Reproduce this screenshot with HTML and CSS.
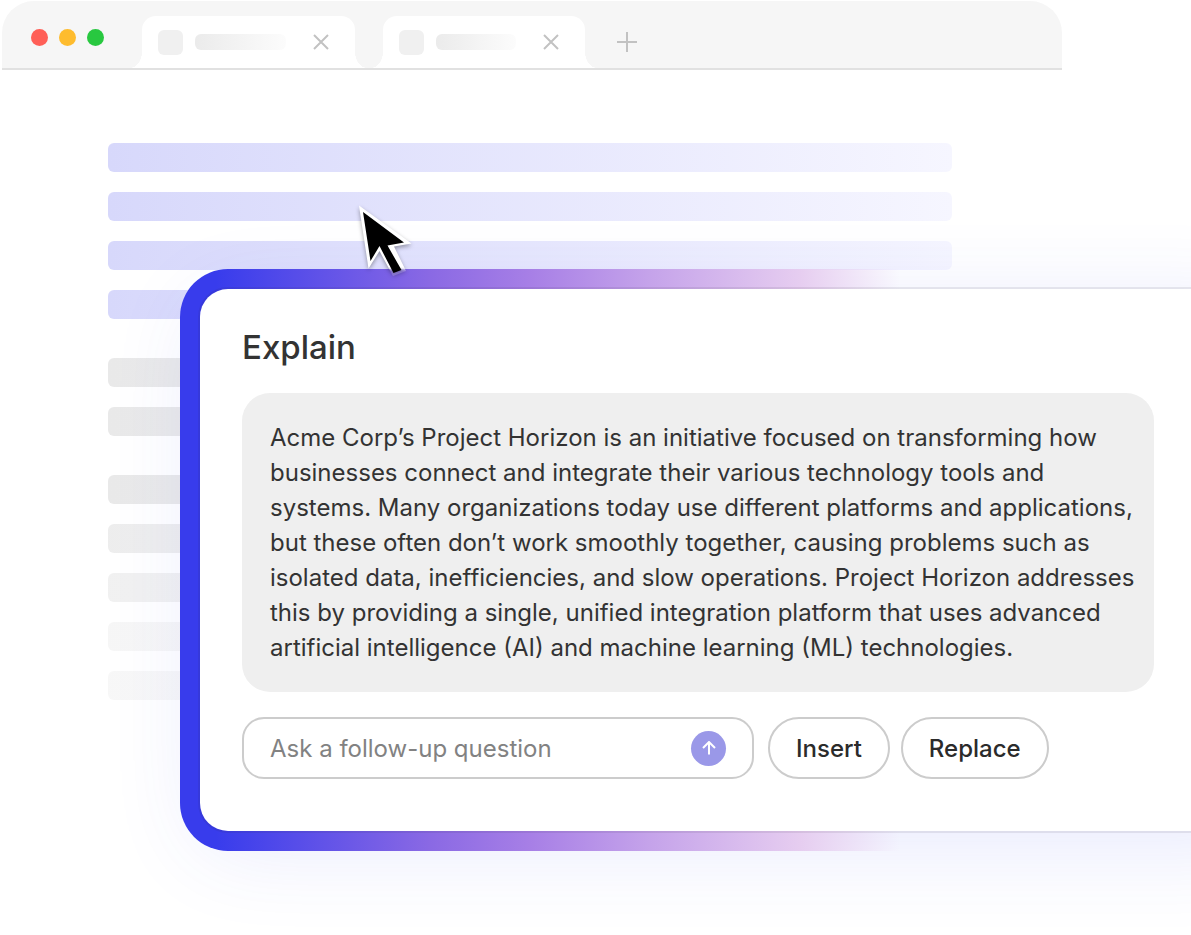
FILE: index.html
```html
<!DOCTYPE html>
<html lang="en">
<head>
    <meta charset="UTF-8">
    <meta name="viewport" content="width=device-width, initial-scale=1.0">
    <title>Explain</title>
    <link rel="stylesheet" href="styles.css">
</head>
<body>
    <div class="stage">
        <div class="browser">
            <div class="tab-bar">
                <div class="dots">
                    <span class="dot red"></span>
                    <span class="dot yellow"></span>
                    <span class="dot green"></span>
                </div>
                <div class="tabs">
                    <div class="tab">
                        <span class="favicon"></span>
                        <span class="tab-title"></span>
                        <button class="icon-btn" type="button" aria-label="Close tab">
                            <svg width="16" height="16" viewBox="0 0 16 16"><path d="M1 1L15 15M15 1L1 15"/></svg>
                        </button>
                    </div>
                    <div class="tab">
                        <span class="favicon"></span>
                        <span class="tab-title short"></span>
                        <button class="icon-btn" type="button" aria-label="Close tab">
                            <svg width="16" height="16" viewBox="0 0 16 16"><path d="M1 1L15 15M15 1L1 15"/></svg>
                        </button>
                    </div>
                </div>
                <button class="icon-btn" type="button" aria-label="New tab">
                    <svg width="20" height="20" viewBox="0 0 20 20"><path d="M10 0V20M0 10H20"/></svg>
                </button>
            </div>

            <div class="document">
                <div class="lines selected">
                    <span></span>
                    <span></span>
                    <span></span>
                    <span></span>
                </div>
                <div class="lines">
                    <span></span>
                    <span></span>
                </div>
                <div class="lines fading">
                    <span></span>
                    <span></span>
                    <span></span>
                    <span></span>
                    <span></span>
                </div>
            </div>
        </div>

        <section class="dialog">
            <div class="dialog-body">
                <h1>Explain</h1>
                <p class="answer">Acme Corp’s Project Horizon is an initiative focused on transforming how businesses connect and integrate their various technology tools and systems. Many organizations today use different platforms and applications, but these often don’t work smoothly together, causing problems such as isolated data, inefficiencies, and slow operations. Project Horizon addresses this by providing a single, unified integration platform that uses advanced artificial intelligence (AI) and machine learning (ML) technologies.</p>
                <form class="actions">
                    <div class="follow-up">
                        <input type="text" aria-label="Follow-up question" placeholder="Ask a follow-up question">
                        <button class="send-btn" type="button" aria-label="Send">
                            <svg width="14" height="14" viewBox="0 0 14 14"><path d="M7 13.5V1M1 7L7 1L13 7"/></svg>
                        </button>
                    </div>
                    <button class="pill-btn" type="button">Insert</button>
                    <button class="pill-btn" type="button">Replace</button>
                </form>
            </div>
        </section>

        <svg class="cursor" width="64" height="80" viewBox="0 0 64 80">
            <defs>
                <linearGradient id="cursor-edge" gradientUnits="userSpaceOnUse" x1="0" y1="67" x2="0" y2="71">
                    <stop offset="0" stop-color="#fff"/>
                    <stop offset="1" stop-color="#fff" stop-opacity="0.2"/>
                </linearGradient>
            </defs>
            <path d="M7 5.500L59.500 43.500L42 46.500L54 71L41 76L27.500 51L16.500 68.500Z" fill="url(#cursor-edge)"/>
            <path d="M11 12L52 42.500L35.500 45.500L49.500 70L41.500 73L27.500 46L18.500 61Z" fill="#000"/>
        </svg>
    </div>
</body>
</html>
```
FILE: styles.css
```css
* {
    box-sizing: border-box;
}
body {
    margin: 0;
    background-color: #fff;
    color: #333;
    font-family: Inter, "Liberation Sans", sans-serif;
}
button {
    font-family: inherit;
    cursor: pointer;
}
.stage {
    position: relative;
    min-height: 100vh;
    padding: 1px 0 0 2px;
    overflow: hidden;
}

/* browser window */
.browser {
    width: 89%;
    min-width: 1060px;
}
.tab-bar {
    display: flex;
    align-items: flex-end;
    padding: 15px 30px 0 29px;
    background-color: #f6f6f6;
    border-bottom: 2px solid #e1e1e1;
    border-radius: 32px 32px 0 0;
}
.dots {
    display: flex;
    gap: 11px;
    margin-right: 38px;
    padding-bottom: 22px;
}
.dot {
    width: 17px;
    height: 17px;
    border-radius: 50%;
}
.red {
    background-color: #ff5f57;
}
.yellow {
    background-color: #febc2e;
}
.green {
    background-color: #28c840;
}
.tabs {
    display: flex;
    gap: 28px;
    margin-right: 32px;
}
.tab {
    position: relative;
    display: flex;
    align-items: center;
    height: 52px;
    padding: 0 26px 0 16px;
    background-color: #fff;
    border-radius: 14px 14px 0 0;
}
.tab::before,
.tab::after {
    content: "";
    position: absolute;
    bottom: 0;
    width: 12px;
    height: 16px;
}
.tab::before {
    right: 100%;
    background: radial-gradient(ellipse 12px 16px at 0 0, transparent 98%, #fff 100%);
}
.tab::after {
    left: 100%;
    background: radial-gradient(ellipse 12px 16px at 100% 0, transparent 98%, #fff 100%);
}
.favicon {
    width: 25px;
    height: 25px;
    margin-right: 12px;
    background-color: #f0f0f0;
    border-radius: 6px;
}
.tab-title {
    width: 91px;
    height: 16px;
    margin-right: 27px;
    background: linear-gradient(to right, #ebebeb, #fcfcfc);
    border-radius: 6px;
}
.tab-title.short {
    width: 80px;
}
.icon-btn {
    display: flex;
    align-items: center;
    height: 52px;
    padding: 0;
    background: none;
    border: none;
}
.icon-btn svg {
    fill: none;
    stroke: #c2c2c2;
    stroke-width: 2;
}

/* page text */
.document {
    display: flex;
    flex-direction: column;
    gap: 39px;
    padding: 73px 110px 0 106px;
}
.lines {
    display: flex;
    flex-direction: column;
    gap: 20px;
}
.lines span {
    height: 29px;
    background: linear-gradient(to right, #e9e9e9, #f6f6f6);
    border-radius: 6px;
}
.selected span {
    background: linear-gradient(to right, #d7d8fb, #f6f6ff);
}
.fading span:nth-child(2) {
    opacity: 0.8;
}
.fading span:nth-child(3) {
    opacity: 0.65;
}
.fading span:nth-child(4) {
    opacity: 0.4;
}
.fading span:nth-child(5) {
    opacity: 0.35;
}

/* dialog runs off the right edge of the stage */
.dialog {
    position: absolute;
    top: 269px;
    left: 180px;
    right: -80px;
    padding: 20px 0 20px 20px;
    isolation: isolate;
}
.dialog::before,
.dialog::after {
    content: "";
    position: absolute;
    z-index: -1;
}
.dialog::before {
    inset: 20px 0 20px 20px;
    border-radius: 28px 0 0 28px;
    box-shadow: 0 16px 90px rgba(60, 70, 235, 0.12);
}
.dialog::after {
    inset: 0;
    border-radius: 48px 0 0 48px;
    background: linear-gradient(to right, #383cec 0, #383cec 36px, #8a69e4 250px, #a77fe6 350px, #c5a3ea 470px, #e6cdf0 620px, rgba(236, 218, 244, 0) 720px);
}
.dialog-body {
    padding: 37px 117px 52px 42px;
    background-color: #fff;
    border-radius: 28px 0 0 28px;
    box-shadow: 0 0 0 2px rgba(40, 30, 60, 0.09);
}
h1 {
    margin: 0 0 24px;
    font-size: 33px;
    font-weight: 500;
    line-height: 43px;
}
.answer {
    margin: 0 0 25px;
    padding: 27px 12px 27px 28px;
    background-color: #efefef;
    border-radius: 28px;
    font-size: 24px;
    line-height: 35px;
}
.actions {
    display: flex;
    align-items: center;
    gap: 11px;
}
.follow-up {
    display: flex;
    align-items: center;
    width: 512px;
    height: 62px;
    margin-right: 3px;
    padding: 0 26px;
    border: 2px solid #ccc;
    border-radius: 22px;
}
.follow-up input {
    flex: 1;
    min-width: 0;
    padding: 0;
    border: none;
    outline: none;
    background: none;
    color: #333;
    font-family: inherit;
    font-size: 24px;
}
.follow-up input::placeholder {
    color: #828282;
    opacity: 1;
}
.send-btn {
    display: flex;
    align-items: center;
    justify-content: center;
    width: 35px;
    height: 35px;
    padding: 0;
    background-color: #9a98e8;
    border: none;
    border-radius: 50%;
}
.send-btn svg {
    fill: none;
    stroke: #fff;
    stroke-width: 2;
}
.pill-btn {
    height: 62px;
    padding: 0 26px;
    background-color: #fff;
    border: 2px solid #ccc;
    border-radius: 31px;
    color: #2b2b2b;
    font-size: 24px;
    font-weight: 500;
}

.cursor {
    position: absolute;
    top: 200px;
    left: 352px;
    filter: drop-shadow(0 2px 2px rgba(0, 0, 0, 0.35));
}
```
